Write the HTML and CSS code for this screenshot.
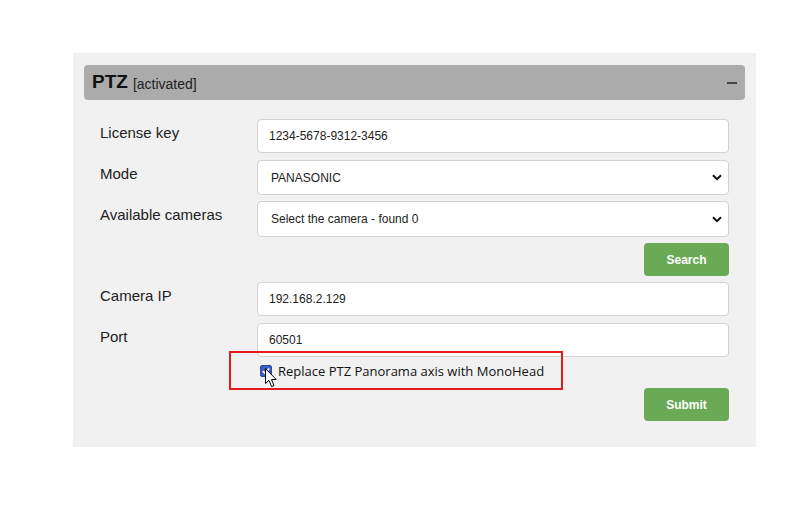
FILE: index.html
```html
<!DOCTYPE html>
<html>
<head>
<meta charset="utf-8">
<link rel="stylesheet" href="styles.css">
</head>
<body>
<div class="panel">
  <div class="header">
    <span class="title">PTZ</span><span class="status">[activated]</span>
    <span class="minus"></span>
  </div>
  <div class="form">
    <div class="row">
      <label class="lbl">License key</label>
      <div class="field"><input class="inp" type="text" value="1234-5678-9312-3456"></div>
    </div>
    <div class="row tight">
      <label class="lbl">Mode</label>
      <div class="field sel"><span>PANASONIC</span><svg class="chev" width="10" height="7" viewBox="0 0 10 7"><path d="M1 1.2 L5 5.2 L9 1.2" fill="none" stroke="#111" stroke-width="2"/></svg></div>
    </div>
    <div class="row tight">
      <label class="lbl">Available cameras</label>
      <div class="field sel tall"><span>Select the camera - found 0</span><svg class="chev" width="10" height="7" viewBox="0 0 10 7"><path d="M1 1.2 L5 5.2 L9 1.2" fill="none" stroke="#111" stroke-width="2"/></svg></div>
    </div>
    <div class="btnrow"><button class="btn">Search</button></div>
    <div class="row">
      <label class="lbl">Camera IP</label>
      <div class="field"><input class="inp" type="text" value="192.168.2.129"></div>
    </div>
    <div class="row">
      <label class="lbl">Port</label>
      <div class="field"><input class="inp" type="text" value="60501"></div>
    </div>
    <div class="checkrow">
      <div class="highlight">
        <span class="cb"><svg width="12" height="12" viewBox="0 0 12 12"><rect x="0.5" y="0.5" width="11" height="11" rx="1.5" fill="#3b5fc4" stroke="#2d4aa3"/><path d="M2.8 6.2 L5 8.3 L9.2 3.6" fill="none" stroke="#fff" stroke-width="1.8"/></svg></span>
        <span class="cbtext">Replace PTZ Panorama axis with MonoHead</span>
        <svg class="cursor" width="13" height="20" viewBox="0 0 13 20"><path d="M0.5 0.5 L0.5 15.5 L4 12.3 L6.6 18.6 L9 17.6 L6.5 11.5 L11.2 11.5 Z" fill="#fff" stroke="#000" stroke-width="1" stroke-linejoin="round"/></svg>
      </div>
    </div>
    <div class="btnrow submitrow"><button class="btn">Submit</button></div>
  </div>
</div>
</body>
</html>
```
FILE: styles.css
```css
html, body {
  margin: 0;
  padding: 0;
  background: #fff;
}
body {
  font-family: "Liberation Sans", Arial, sans-serif;
  color: #222;
}
.panel {
  margin: 53px 0 0 73px;
  width: 683px;
  height: 394px;
  box-sizing: border-box;
  padding: 12px 11px;
  background: #f1f1f1;
}
.header {
  height: 35px;
  background: #ababab;
  border-radius: 4px;
  display: flex;
  align-items: center;
  padding: 0 8px;
  position: relative;
}
.title {
  font-weight: bold;
  font-size: 19px;
  color: #111;
  margin-right: 5px;
  position: relative;
  top: -1px;
}
.status {
  font-size: 14px;
  color: #222;
  position: relative;
  top: 1px;
}
.minus {
  margin-left: auto;
  width: 10px;
  height: 2px;
  background: #444;
  margin-right: 0px;
}
.form {
  padding: 19px 16px 0 16px;
  display: flex;
  flex-direction: column;
}
.row {
  display: flex;
  align-items: flex-start;
  margin-bottom: 7px;
}
.row.tight {
  margin-bottom: 6px;
}
.lbl {
  width: 157px;
  flex: none;
  font-size: 15px;
  color: #222;
  padding-top: 5px;
}
.field {
  flex: 1;
  height: 34px;
  box-sizing: border-box;
  background: #fff;
  border: 1px solid #d3d3d3;
  border-radius: 4px;
  display: flex;
  align-items: center;
}
.field.sel {
  height: 35px;
}
.field.tall {
  height: 36px;
}
.inp {
  border: none;
  outline: none;
  background: transparent;
  width: 100%;
  padding: 0 11px;
  font-family: "Liberation Sans", Arial, sans-serif;
  font-size: 12px;
  color: #222;
}
.sel {
  padding: 0 6px 0 13px;
  font-size: 12px;
  color: #222;
}
.sel span {
  flex: 1;
}
.chev {
  flex: none;
}
.btnrow {
  display: flex;
  justify-content: flex-end;
  margin-bottom: 6px;
}
.btn {
  width: 85px;
  height: 33px;
  border: none;
  border-radius: 4px;
  background: #6aaa57;
  color: #fff;
  font-family: "Liberation Sans", Arial, sans-serif;
  font-weight: bold;
  font-size: 12px;
  padding: 0;
}
.checkrow {
  display: flex;
  margin-top: -13px;
  margin-bottom: 0;
}
.highlight {
  margin-left: 129px;
  width: 334px;
  height: 39px;
  box-sizing: border-box;
  border: 2px solid #e31b1b;
  display: flex;
  align-items: center;
  padding-left: 29px;
  position: relative;
}
.cb {
  width: 12px;
  height: 12px;
  display: flex;
  margin-right: 6px;
}
.cbtext {
  font-family: "Open Sans", "Noto Sans", sans-serif;
  font-size: 13px;
  color: #111;
}
.cursor {
  position: absolute;
  left: 34px;
  top: 15px;
}
.submitrow {
  margin-top: -2px;
}
```
